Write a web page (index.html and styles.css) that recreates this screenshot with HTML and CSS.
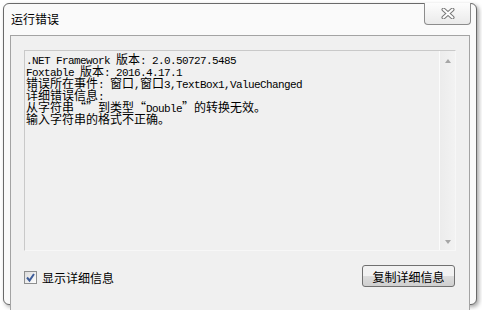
FILE: index.html
```html
<!DOCTYPE html>
<html lang="zh-CN">
<head>
    <meta charset="UTF-8">
    <title>运行错误</title>
    <link rel="stylesheet" href="styles.css">
</head>
<body>
    <div class="janela">
        <!-- Barra de título -->
        <div class="titulo">
            <span class="titulo-texto">运行错误</span>
            <button class="fechar">
                <svg width="14" height="11" viewBox="0 0 14 11">
                    <path d="M2.5 1.5 L11.5 9.5 M11.5 1.5 L2.5 9.5" stroke="#767676" stroke-width="4" stroke-linecap="round"/>
                    <path d="M2.5 1.5 L11.5 9.5 M11.5 1.5 L2.5 9.5" stroke="#fdfdfd" stroke-width="2" stroke-linecap="round"/>
                </svg>
            </button>
        </div>

        <div class="painel">
            <!-- Caixa com os detalhes do erro -->
            <div class="detalhes">
                <div class="detalhes-texto">
                    <div class="linha"><span class="en">.NET Framework </span>版本<span class="en">: 2.0.50727.5485</span></div>
                    <div class="linha"><span class="en">Foxtable </span>版本<span class="en">: 2016.4.17.1</span></div>
                    <div class="linha">错误所在事件<span class="en">: </span>窗口<span class="en">,</span>窗口<span class="en">3,TextBox1,ValueChanged</span></div>
                    <div class="linha">详细错误信息<span class="en">:</span></div>
                    <div class="linha">从字符串“”到类型“<span class="en">Double</span>”的转换无效。</div>
                    <div class="linha">输入字符串的格式不正确。</div>
                </div>
                <div class="rolagem">
                    <span class="seta seta-cima"></span>
                    <span class="seta seta-baixo"></span>
                </div>
            </div>

            <div class="rodape">
                <label class="opcao">
                    <span class="caixa">
                        <svg width="11" height="11" viewBox="0 0 11 11">
                            <path d="M2 5.5 L4.5 8.5 L9 2" fill="none" stroke="#3d5c99" stroke-width="2"/>
                        </svg>
                    </span>
                    显示详细信息
                </label>
                <button class="copiar">复制详细信息</button>
            </div>
        </div>
    </div>
</body>
</html>
```

FILE: styles.css
```css
body {
    margin: 0;
    width: 482px;
    height: 310px;
    background-color: #fff;
    font-family: "Noto Sans CJK SC", "Liberation Sans", sans-serif;
    font-size: 12px;
    color: #000;
    overflow: hidden;
}
.janela {
    position: relative; /* Para posicionar o botão fechar */
    margin: 3px 0 0 3px;
    width: 472px;
    height: 300px;
    border: 1px solid #6a6a6a;
    border-radius: 6px;
    background-color: #fafafa;
    box-shadow: 2px 2px 4px rgba(0, 0, 0, 0.35);
}
.titulo {
    height: 31px;
    box-sizing: border-box;
    padding: 6px 0 0 7px;
}
.titulo-texto {
    line-height: 16px;
}
.fechar {
    position: absolute;
    top: -1px;
    right: 5px;
    width: 47px;
    height: 22px;
    padding: 0;
    border: 1px solid #8c8c8c;
    border-top: none;
    border-radius: 0 0 4px 4px;
    background: linear-gradient(#fdfdfd, #eaeaea);
    display: flex;
    align-items: center;
    justify-content: center;
}
.painel {
    margin-left: 6px;
    width: 458px;
    height: 264px;
    border: 1px solid #a3a3a3;
    background-color: #f0f0f0;
    padding-top: 14px;
    box-sizing: content-box;
}
.detalhes {
    margin-left: 13px;
    width: 430px;
    height: 199px;
    border: 1px solid;
    border-color: #c9c9c9 #f7f7f7 #f7f7f7 #c9c9c9;
    background-color: #f0f0f0;
    display: flex;
}
.detalhes-texto {
    flex: 1;
    padding: 2px 0 0 1px;
}
.linha {
    height: 12px;
    line-height: 12px;
    white-space: pre;
}
.en {
    font-family: "Liberation Mono", monospace;
    font-size: 11px;
    letter-spacing: -0.6px; /* 6px por caractere */
}
.rolagem {
    width: 15px;
    border-left: 1px solid #fbfbfb;
    background: linear-gradient(90deg, #ececec, #f2f2f2);
    display: flex;
    flex-direction: column;
    justify-content: space-between;
    align-items: center;
    padding: 8px 0 6px;
}
.seta {
    width: 0;
    height: 0;
    border-left: 3.5px solid transparent;
    border-right: 3.5px solid transparent;
}
.seta-cima {
    border-bottom: 4px solid #a6a6a6;
}
.seta-baixo {
    border-top: 4px solid #a6a6a6;
}
.rodape {
    display: flex;
    align-items: center;
    justify-content: space-between;
    margin-top: 14px;
    padding: 0 14px 0 13px;
}
.opcao {
    display: flex;
    align-items: center;
    gap: 5px;
    margin-top: 2px;
}
.caixa {
    width: 11px;
    height: 11px;
    border: 1px solid #8e8f8f;
    background: linear-gradient(135deg, #dcdcdc, #fdfdfd);
    display: flex;
}
.copiar {
    width: 93px;
    height: 22px;
    padding: 0;
    border: 1px solid #707070;
    border-radius: 3px;
    background: linear-gradient(#f2f2f2 50%, #dddddd 50%, #cfcfcf);
    font-family: "Noto Sans CJK SC", sans-serif;
    font-size: 12px;
    color: #000;
}
```
